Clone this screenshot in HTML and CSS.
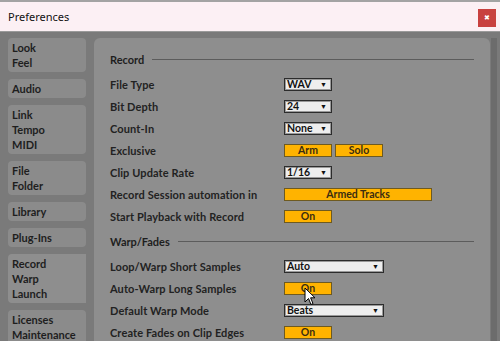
FILE: index.html
```html
<!DOCTYPE html>
<html lang="en">
<head>
<meta charset="UTF-8">
<title>Preferences</title>
<link rel="stylesheet" href="styles.css">
</head>
<body>

<div class="window">
    <!-- title bar -->
    <div class="titlebar">
        <span class="title">Preferences</span>
        <span class="close">&#x2716;</span>
    </div>

    <div class="frame">
        <!-- tabs -->
        <div class="tabs">
            <div class="tab">Look<br>Feel</div>
            <div class="tab">Audio</div>
            <div class="tab">Link<br>Tempo<br>MIDI</div>
            <div class="tab">File<br>Folder</div>
            <div class="tab">Library</div>
            <div class="tab">Plug-Ins</div>
            <div class="tab selected">Record<br>Warp<br>Launch</div>
            <div class="tab">Licenses<br>Maintenance</div>
        </div>

        <!-- settings panel -->
        <div class="panel">
            <div class="section">Record</div>
            <div class="row"><span class="label">File Type</span><span class="select">WAV</span></div>
            <div class="row"><span class="label">Bit Depth</span><span class="select">24</span></div>
            <div class="row"><span class="label">Count-In</span><span class="select">None</span></div>
            <div class="row"><span class="label">Exclusive</span><span class="btn">Arm</span><span class="btn">Solo</span></div>
            <div class="row"><span class="label">Clip Update Rate</span><span class="select">1/16</span></div>
            <div class="row"><span class="label">Record Session automation in</span><span class="btn wide">Armed Tracks</span></div>
            <div class="row"><span class="label">Start Playback with Record</span><span class="btn">On</span></div>

            <div class="section">Warp/Fades</div>
            <div class="row"><span class="label">Loop/Warp Short Samples</span><span class="select long">Auto</span></div>
            <div class="row"><span class="label">Auto-Warp Long Samples</span><span class="btn">On</span></div>
            <div class="row"><span class="label">Default Warp Mode</span><span class="select long">Beats</span></div>
            <div class="row"><span class="label">Create Fades on Clip Edges</span><span class="btn">On</span></div>
        </div>

        <div class="edge"></div>
    </div>

    <!-- mouse pointer -->
    <svg class="cursor" width="12" height="19" viewBox="0 0 12 19">
        <path d="M1 1 L1 15 L4.5 11.5 L7 17.5 L9 16.6 L6.6 10.8 L11 10.8 Z" fill="#fff" stroke="#000" stroke-width="1"/>
    </svg>
</div>

</body>
</html>
```

FILE: styles.css
```css
body {
    margin: 0;
    font-family: Lato, sans-serif;
    background: #7a7a7a;
    overflow: hidden;
}

.window {
    position: relative;
    width: 500px;
    height: 341px;
    overflow: hidden;
}

.titlebar {
    height: 29px;
    border-top: 2px solid #a3a3a3;
    border-bottom: 1px solid #9a9a9a;
    background: #fcf0f4;
    display: flex;
    align-items: center;
    justify-content: space-between;
    padding: 0 4px 0 8px;
}

.title {
    font-family: 'Noto Sans', sans-serif;
    font-size: 11px;
    color: #111;
}

.close {
    width: 18px;
    height: 18px;
    background: #c8413f;
    color: #fff;
    font-size: 7px;
    display: flex;
    align-items: center;
    justify-content: center;
    margin-top: 2px;
}

.frame {
    display: flex;
    padding: 6px 0 0 8px;
    height: 303px;
}

.tabs {
    width: 78px;
    display: flex;
    flex-direction: column;
    gap: 7px;
}

.tab {
    background: #8b8b8b;
    border-radius: 4px;
    padding: 2px 4px;
    font-size: 11px;
    font-weight: 700;
    line-height: 15px;
    color: #1e1e1e;
}

.tab.selected {
    background: #8e8e8e;
    border-radius: 4px 0 0 4px;
}

.panel {
    width: 364px;
    margin-left: 8px;
    background: #8e8e8e;
    border-radius: 6px 6px 0 0;
    padding: 10px 16px 0 16px;
}

.section {
    height: 22px;
    margin: 0 0 3px;
    display: flex;
    align-items: center;
    gap: 8px;
    font-size: 11px;
    font-weight: 700;
    color: #1e1e1e;
}

.row + .section {
    margin-top: 3px;
}

.section::after {
    content: "";
    flex: 1;
    height: 1px;
    background: #5c5c5c;
}

.row {
    height: 22px;
    display: flex;
    align-items: center;
    gap: 3px;
}

.label {
    width: 171px;
    font-size: 11px;
    font-weight: 700;
    letter-spacing: 0.1px;
    color: #222;
}

.select {
    width: 40px;
    height: 11px;
    padding: 0 4px 0 2px;
    background: #eeeeee;
    border: 1px solid #2c2c2c;
    box-shadow: inset 0 0 0 1px #9a9a9a;
    font-size: 10.5px;
    font-weight: 700;
    line-height: 11px;
    color: #111;
    display: flex;
    justify-content: space-between;
}

.select::after {
    content: "\25BC";
    font-size: 7px;
}

.select.long {
    width: 92px;
}

.btn {
    width: 46px;
    height: 11px;
    background: #ffb300;
    border: 1px solid #6e5a20;
    font-size: 10.5px;
    font-weight: 700;
    line-height: 11px;
    text-align: center;
    color: #3a2d10;
}

.btn.wide {
    width: 146px;
}

.edge {
    width: 6px;
    margin-left: 1px;
    background: #6c6c6c;
}

.cursor {
    position: absolute;
    left: 304px;
    top: 287px;
}
```
